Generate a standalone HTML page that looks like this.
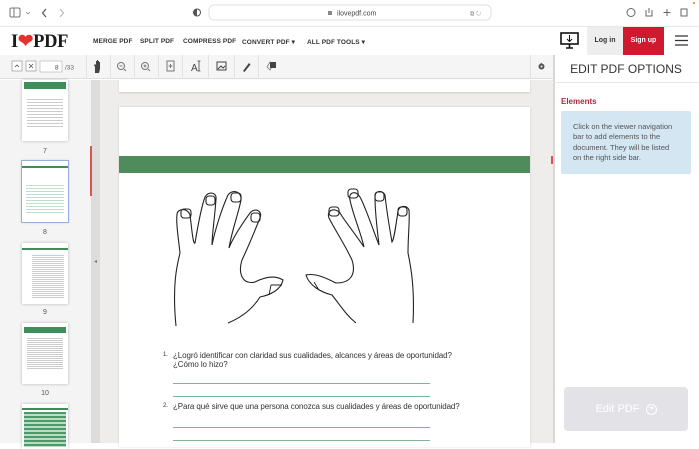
<!DOCTYPE html>
<html><head><meta charset="utf-8"><style>
*{margin:0;padding:0;box-sizing:border-box}
body{width:699px;height:443px;overflow:hidden;background:#fff;font-family:"Liberation Sans",sans-serif;position:relative}
.abs{position:absolute}
.nav a{position:absolute;top:38px;font-size:6.5px;font-weight:bold;color:#333;letter-spacing:.1px}
.tb{position:absolute;top:55px;left:0;width:553px;height:24px;background:#f5f5f5;border-bottom:1px solid #ddd}
.sep{position:absolute;top:0;width:1px;height:24px;background:#e2e2e2}
.ln{position:absolute;left:173px;width:257px;height:1px;background:#7fb59a}
.q{position:absolute;font-size:8px;color:#333;font-family:"Liberation Sans",sans-serif;letter-spacing:-.1px}
.thumb{position:absolute;left:22px;width:46px;background:#fff;box-shadow:0 0 3px rgba(0,0,0,.25)}
.tn{position:absolute;left:0;width:90px;text-align:center;font-size:7px;color:#555}
</style></head><body>
<div class="abs" style="left:0;top:0;width:699px;height:27px;background:#fff;border-bottom:1px solid #eee"></div>
<svg class="abs" style="left:0;top:0" width="699" height="27">
<rect x="10" y="8" width="10" height="9" rx="1.5" fill="none" stroke="#777" stroke-width="1"/><line x1="14" y1="8" x2="14" y2="17" stroke="#777"/>
<path d="M26 12l2 2 2-2" fill="none" stroke="#888" stroke-width=".8"/>
<path d="M46 9l-3.5 4 3.5 4" fill="none" stroke="#555" stroke-width="1.2"/>
<path d="M60 9l3.5 4-3.5 4" fill="none" stroke="#bbb" stroke-width="1.2"/>
<circle cx="197" cy="12.5" r="3.5" fill="none" stroke="#555"/><path d="M197 9a3.5 3.5 0 0 0 0 7z" fill="#555"/>
<rect x="209" y="5" width="282" height="15" rx="5" fill="#fff" stroke="#e0e0e0"/>
<rect x="328" y="11" width="4" height="4" fill="#888"/>
<text x="337" y="15.5" font-size="7" fill="#444" font-family="Liberation Sans">ilovepdf.com</text>
<text x="470" y="15.5" font-size="6" fill="#888">⧉ ↻</text>
<circle cx="631" cy="12.5" r="4" fill="none" stroke="#666"/>
<path d="M646 10v6h6v-6M649 8v5" fill="none" stroke="#666"/>
<path d="M667 9v7M663.5 12.5h7" stroke="#666"/>
<rect x="681" y="9" width="6" height="7" fill="none" stroke="#666"/>
<circle cx="694" cy="3" r="1.2" fill="#e8a33a"/>
</svg>
<div class="abs" style="left:0;top:27px;width:699px;height:28px;background:#fff;box-shadow:0 1px 3px rgba(0,0,0,.15)"></div>
<div class="abs" style="left:11px;top:31px;font-family:'Liberation Serif',serif;font-weight:bold;font-size:18.5px;color:#1a1a1a;letter-spacing:-.3px">I<span style="color:#e5322d">❤</span>PDF</div>
<div class="nav"><a style="left:93px">MERGE PDF</a><a style="left:140px">SPLIT PDF</a><a style="left:183px">COMPRESS PDF</a><a style="left:242px">CONVERT PDF ▾</a><a style="left:307px">ALL PDF TOOLS ▾</a></div>
<svg class="abs" style="left:560px;top:32px" width="20" height="18"><rect x="1" y="1" width="17" height="11" fill="none" stroke="#111" stroke-width="1.6"/><path d="M9.5 3v6M7 7l2.5 2.5L12 7" fill="none" stroke="#111"/><path d="M6 16h7M9.5 12v4" stroke="#111" stroke-width="1.6"/></svg>
<div class="abs" style="left:587px;top:27px;width:36px;height:28px;background:#eeeeee;font-size:7px;font-weight:bold;color:#333;text-align:center;line-height:28px">Log in</div>
<div class="abs" style="left:623px;top:27px;width:41px;height:28px;background:#d0182f;font-size:7px;font-weight:bold;color:#fff;text-align:center;line-height:28px">Sign up</div>
<svg class="abs" style="left:675px;top:35px" width="13" height="11"><path d="M0 1h13M0 5.5h13M0 10h13" stroke="#333" stroke-width="1.3"/></svg>
<div class="tb">
<svg width="553" height="24">
<rect x="12" y="6" width="10" height="10" fill="#fff" stroke="#999" stroke-width=".7"/><path d="M15 12l2-2 2 2" fill="none" stroke="#555" stroke-width=".8"/>
<rect x="26" y="6" width="10" height="10" fill="#fff" stroke="#999" stroke-width=".7"/><path d="M29 9l4 4M33 9l-4 4" stroke="#555" stroke-width=".8"/>
<rect x="40" y="6" width="22" height="11" fill="#fff" stroke="#bbb" stroke-width=".7"/>
<text x="55" y="14.5" font-size="6.5" fill="#444">8</text><text x="65" y="14.5" font-size="6.5" fill="#666">/33</text>
<path d="M95 18v-6l-1-2 1-1 1 1v-4h1v4-5h1v5-4h1v4-3h1v7l-1 4z" fill="#444"/>
<circle cx="121" cy="11" r="3.5" fill="none" stroke="#777"/><path d="M119.5 11h3M124 14l2 2" stroke="#777"/>
<circle cx="145" cy="11" r="3.5" fill="none" stroke="#777"/><path d="M143.5 11h3M145 9.5v3M148 14l2 2" stroke="#777"/>
<rect x="167" y="6" width="7" height="10" fill="none" stroke="#777"/><path d="M170.5 9v4M168.5 11h4" stroke="#777"/>
<text x="191" y="16" font-size="10" fill="#444">A</text><path d="M199 6v10M197.5 6h3M197.5 16h3" stroke="#444" stroke-width=".8"/>
<rect x="217" y="7" width="9" height="8" fill="none" stroke="#444"/><path d="M218 14l3-3 2 2 2-2" fill="none" stroke="#444"/>
<path d="M243 16l6-8 1.5 1.5-6 7.5z" fill="#444"/>
<path d="M267 12l3-5 3 3-3 5z" fill="none" stroke="#777" stroke-width=".8"/><rect x="270" y="7" width="6" height="6" fill="#444"/>
<path d="M541 8l1 1.5-1 1.5 1 1.5-1 1.5" stroke="#555" fill="none"/><circle cx="541.5" cy="11.5" r="3" fill="#555"/><circle cx="541.5" cy="11.5" r="1" fill="#f5f5f5"/>
</svg>
<div class="sep" style="left:86px"></div><div class="sep" style="left:110px"></div><div class="sep" style="left:134px"></div><div class="sep" style="left:158px"></div><div class="sep" style="left:182px"></div><div class="sep" style="left:208px"></div><div class="sep" style="left:234px"></div><div class="sep" style="left:258px"></div><div class="sep" style="left:530px"></div>
</div>
<div class="abs" style="left:0;top:80px;width:91px;height:363px;background:#f4f4f5"></div>
<div class="abs" style="left:91px;top:80px;width:9px;height:363px;background:#dcdcdc"></div>
<div class="abs" style="left:90px;top:146px;width:2px;height:50px;background:#d9534f"></div>
<div class="abs" style="left:94px;top:258px;font-size:6px;color:#777">◂</div>
<div class="thumb" style="top:80px;height:61px"><div style="margin:2px 2px;height:7px;background:#3e8e5a"></div><div style="margin:8px 5px;height:30px;background:repeating-linear-gradient(#fff 0 2px,#ccc 2px 3px)"></div></div>
<div class="tn" style="top:148px">7</div>
<div class="thumb" style="top:161px;height:61px;outline:1px solid #9aaedb"><div style="margin-top:5px;height:2px;background:#3e8e5a"></div><div style="margin:15px 4px 0;height:30px;background:repeating-linear-gradient(#fff 0 2px,#bde0cc 2px 3px)"></div></div>
<div class="tn" style="top:229px">8</div>
<div class="thumb" style="top:243px;height:61px"><div style="margin-top:5px;height:2px;background:#3e8e5a"></div><div style="margin:4px 4px 0 10px;height:45px;background:repeating-linear-gradient(#fff 0 1px,#ccc 1px 2px)"></div></div>
<div class="tn" style="top:309px">9</div>
<div class="thumb" style="top:323px;height:61px"><div style="margin:4px 2px;height:6px;background:#3e8e5a"></div><div style="margin:4px 5px 0;height:32px;background:repeating-linear-gradient(#fff 0 1px,#ccc 1px 2px)"></div></div>
<div class="tn" style="top:390px">10</div>
<div class="thumb" style="top:404px;height:45px"><div style="margin-top:4px;height:2px;background:#3e8e5a"></div><div style="margin:2px 2px;height:35px;background:repeating-linear-gradient(#4d9a68 0 2px,#b9dcc6 2px 4px)"></div></div>
<div class="abs" style="left:100px;top:80px;width:453px;height:363px;background:#eeedeb"></div>
<div class="abs" style="left:119px;top:80px;width:411px;height:12px;background:#fff;box-shadow:0 1px 2px rgba(0,0,0,.15)"></div>
<div class="abs" style="left:119px;top:107px;width:411px;height:340px;background:#fff;box-shadow:0 0 2px rgba(0,0,0,.15)"></div>
<div class="abs" style="left:119px;top:156px;width:411px;height:17px;background:#4e8c5c"></div>
<div class="abs" style="left:551px;top:156px;width:2px;height:8px;background:#d9534f"></div>
<svg class="abs" style="left:160px;top:175px" width="280" height="170" fill="none" stroke="#222" stroke-width="1.1">
<path d="M16 151C12 110 17 90 20 78 18 60 16 48 17 39 18 33 28 33 30 40 32 55 33 70 35 68 38 50 42 30 45 22 48 16 57 17 56 24 55 40 52 60 52 70 55 55 62 33 68 20 72 14 82 16 81 25 78 40 72 55 69 73 74 60 85 45 90 38 95 32 103 36 100 43 95 55 90 68 82 85 78 98 82 110 95 107 105 102 115 100 123 105 121 115 110 120 100 122 92 135 80 143 68 148 56 160"/>
<path d="M109 120l2-10M111 110l11 0" stroke-width=".9"/>
<rect x="21" y="34" width="10" height="9" rx="3"/><rect x="46" y="21" width="9" height="9" rx="3"/><rect x="71" y="18" width="10" height="9" rx="3"/><rect x="91" y="38" width="9" height="9" rx="3"/>
<path d="M253 148C255 110 250 88 248 78 248 60 250 45 249 35 247 30 240 30 238 36 236 50 234 65 232 67 229 50 226 30 225 20 222 15 215 15 215 22 215 40 218 60 219 70 213 55 206 33 200 22 196 15 188 17 190 25 193 40 200 55 204 72 196 60 184 45 180 38 175 32 166 35 169 43 175 55 184 68 192 85 196 98 192 108 176 108 164 102 155 98 146 100 149 110 160 117 172 120 180 130 186 140 196 148 213 158"/>
<path d="M159 115l-5-8" stroke-width=".9"/>
<rect x="238" y="32" width="9" height="9" rx="3"/><rect x="215" y="17" width="9" height="9" rx="3"/><rect x="188" y="14" width="10" height="9" rx="3"/><rect x="169" y="32" width="10" height="9" rx="3"/>
</svg>
<div class="q" style="left:163px;top:352px;font-size:6px">1.</div>
<div class="q" style="left:173px;top:351px">¿Logró identificar con claridad sus cualidades, alcances y áreas de oportunidad?<br>¿Cómo lo hizo?</div>
<div class="ln" style="top:383px"></div><div class="ln" style="top:396px"></div>
<div class="q" style="left:163px;top:403px;font-size:6px">2.</div>
<div class="q" style="left:173px;top:402px">¿Para qué sirve que una persona conozca sus cualidades y áreas de oportunidad?</div>
<div class="ln" style="top:427px"></div><div class="ln" style="top:440px"></div>
<div class="abs" style="left:553px;top:55px;width:146px;height:388px;background:#fff;border-left:2px solid #d6d6d6"></div>
<div class="abs" style="left:553px;top:82px;width:146px;height:1px;background:#e6e6e6"></div>
<div class="abs" style="left:553px;top:62px;width:146px;text-align:center;font-size:12px;color:#333">EDIT PDF OPTIONS</div>
<div class="abs" style="left:561px;top:97px;font-size:8px;font-weight:bold;color:#b0283a">Elements</div>
<div class="abs" style="left:561px;top:111px;width:130px;height:63px;background:#d3e6f2;border-radius:2px;padding:11px 12px;font-size:7.5px;line-height:10.4px;color:#555">Click on the viewer navigation bar to add elements to the document. They will be listed on the right side bar.</div>
<div class="abs" style="left:564px;top:387px;width:124px;height:44px;background:#e3e3e7;border-radius:4px;color:#fff;font-size:11px;text-align:center;line-height:44px">Edit PDF &nbsp;<span style="display:inline-block;width:11px;height:11px;border:1.3px solid #fff;border-radius:50%;font-size:7px;line-height:8px;vertical-align:middle">➜</span></div>
</body></html>
